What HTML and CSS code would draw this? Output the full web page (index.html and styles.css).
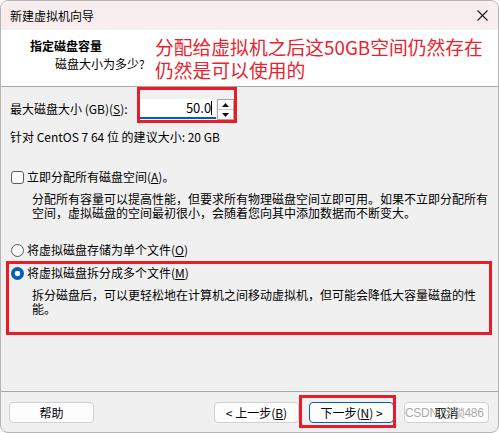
FILE: index.html
```html
<!DOCTYPE html>
<html>
<head>
<meta charset="utf-8">
<title>新建虚拟机向导</title>
<link rel="stylesheet" href="styles.css">
</head>
<body>

<div class="win">
<div class="ttl_bar">
<span class="ttl">新建虚拟机向导</span>
<svg class="ttl_close" width="11" height="11" viewBox="0 0 11 11"><path d="M0.5 0.5L10.5 10.5M10.5 0.5L0.5 10.5" stroke="#1b1b1b" stroke-width="1.1" fill="none"/></svg>
</div>

<div class="hdr">
<div class="hdr_txt">
<div class="hdr_t">指定磁盘容量</div>
<div class="hdr_s">磁盘大小为多少?</div>
</div>
<div class="note">分配给虚拟机之后这50GB空间仍然存在<br>仍然是可以使用的</div>
</div>

<div class="bdy">
<div class="size_row">
<span class="size_lbl">最大磁盘大小 (GB)(<u>S</u>):</span>
<div class="mark spin_mark">
<div class="spin_inp">50.0<span class="caret"></span></div>
<div class="spin_btns">
<div class="spin_btn"><svg width="7" height="4" viewBox="0 0 7 4"><path d="M3.5 0L7 4H0Z" fill="#111"/></svg></div>
<div class="spin_btn"><svg width="7" height="4" viewBox="0 0 7 4"><path d="M0 0H7L3.5 4Z" fill="#111"/></svg></div>
</div>
</div>
</div>
<div class="hint">针对 CentOS 7 64 位 的建议大小: 20 GB</div>

<div class="opt opt_chk"><span class="chk"></span><span>立即分配所有磁盘空间(<u>A</u>)。</span></div>
<div class="desc">分配所有容量可以提高性能，但要求所有物理磁盘空间立即可用。如果不立即分配所有<br>空间，虚拟磁盘的空间最初很小，会随着您向其中添加数据而不断变大。</div>

<div class="opt opt_r1"><span class="rad"></span><span>将虚拟磁盘存储为单个文件(<u>O</u>)</span></div>
<div class="mark split_mark">
<div class="opt"><span class="rad rad_on"></span><span>将虚拟磁盘拆分成多个文件(<u>M</u>)</span></div>
<div class="desc">拆分磁盘后，可以更轻松地在计算机之间移动虚拟机，但可能会降低大容量磁盘的性<br>能。</div>
</div>
</div>

<div class="ftr">
<div class="btn">帮助</div>
<div class="ftr_sp"></div>
<div class="btn">&lt; 上一步(<u>B</u>)</div>
<div class="btn btn_def">下一步(<u>N</u>) &gt;<span class="mark btn_mark"></span></div>
<div class="btn">取消<span class="wmark">CSDN @锁486</span></div>
</div>
</div>

</body>
</html>
```

FILE: styles.css
```css
* {box-sizing:border-box;}

body {margin:0;background:#fff;font-family:"Noto Sans CJK SC","Microsoft YaHei",sans-serif;font-size:12px;color:#000;}

.win {width:499px;height:433px;display:flex;flex-direction:column;border:1px solid #b4b4b4;border-radius:8px;overflow:hidden;background:#f0f0f0;}

.ttl_bar {height:29px;flex:none;display:flex;align-items:center;padding:0 10px 0 9px;background:#f8eeef;}
.ttl {flex:1;line-height:14px;}

.hdr {height:57px;flex:none;display:flex;background:#fff;border-bottom:1px solid #a8a8a8;}
.hdr_txt {width:125px;padding:8px 0 0 29px;box-sizing:content-box;}
.hdr_t {font-weight:bold;line-height:16px;}
.hdr_s {margin:3px 0 0 25px;line-height:14px;white-space:nowrap;}
.note {margin-top:5px;color:#e8232d;font-size:18.8px;line-height:23px;white-space:nowrap;}

.mark {border:3px solid #e91c28;}

.bdy {flex:1;padding:0 0 0 9px;}

.size_row {display:flex;align-items:flex-start;height:36px;}
.size_lbl {width:127px;padding-top:15px;line-height:14px;white-space:nowrap;}
.spin_mark {width:100px;height:36px;display:flex;align-items:flex-start;padding-top:9px;}
.spin_inp {width:77px;height:20px;background:#fff;border-bottom:2px solid #005fb8;text-align:right;padding-right:4px;font-size:13px;line-height:18px;}
.caret {display:inline-block;width:1px;height:14px;background:#000;vertical-align:-2px;}
.spin_btns {width:17px;height:21px;margin-left:1px;display:flex;flex-direction:column;border:1px solid #a6a6a6;background:#fff;}
.spin_btn {flex:1;display:flex;align-items:center;justify-content:center;}
.spin_btn + .spin_btn {border-top:1px solid #c8c8c8;}

.hint {margin-top:7px;line-height:14px;}

.opt {display:flex;align-items:center;height:14px;line-height:14px;white-space:nowrap;}
.opt_chk {margin-top:26px;}
.opt_r1 {margin-top:23px;}
.chk {width:13px;height:13px;margin:0 3px 0 1px;border:1px solid #5c5c5c;border-radius:3px;background:#fbfbfb;}
.rad {width:13px;height:13px;margin:0 3px 0 1px;border:1px solid #5c5c5c;border-radius:50%;background:#fbfbfb;}
.rad_on {border:none;background:radial-gradient(circle,#fff 0 2.6px,#005fb8 3.1px);}

.desc {margin-top:8px;padding-left:22px;line-height:14px;white-space:nowrap;}

.split_mark {margin:4px 0 0 -4px;width:486px;height:74px;padding:2px 0 0 1px;}

.ftr {height:41px;flex:none;display:flex;align-items:flex-start;padding:10px 9px 0 8px;border-top:1px solid #a8a8a8;}
.ftr_sp {flex:1;}
.btn {position:relative;width:85px;height:21px;display:flex;align-items:center;justify-content:center;background:#fdfdfd;border:1px solid #d0d0d0;border-radius:4px;line-height:14px;white-space:nowrap;}
.btn + .btn {margin-left:10px;}
.btn_def {border-color:#005fb8;}
.btn_mark {position:absolute;left:-11px;right:-3px;top:-8px;bottom:-6px;}
.wmark {position:absolute;left:0;top:3px;font-family:"Liberation Sans",Arial,sans-serif;font-size:12px;letter-spacing:-0.3px;line-height:14px;color:rgba(140,140,140,0.75);}
```
